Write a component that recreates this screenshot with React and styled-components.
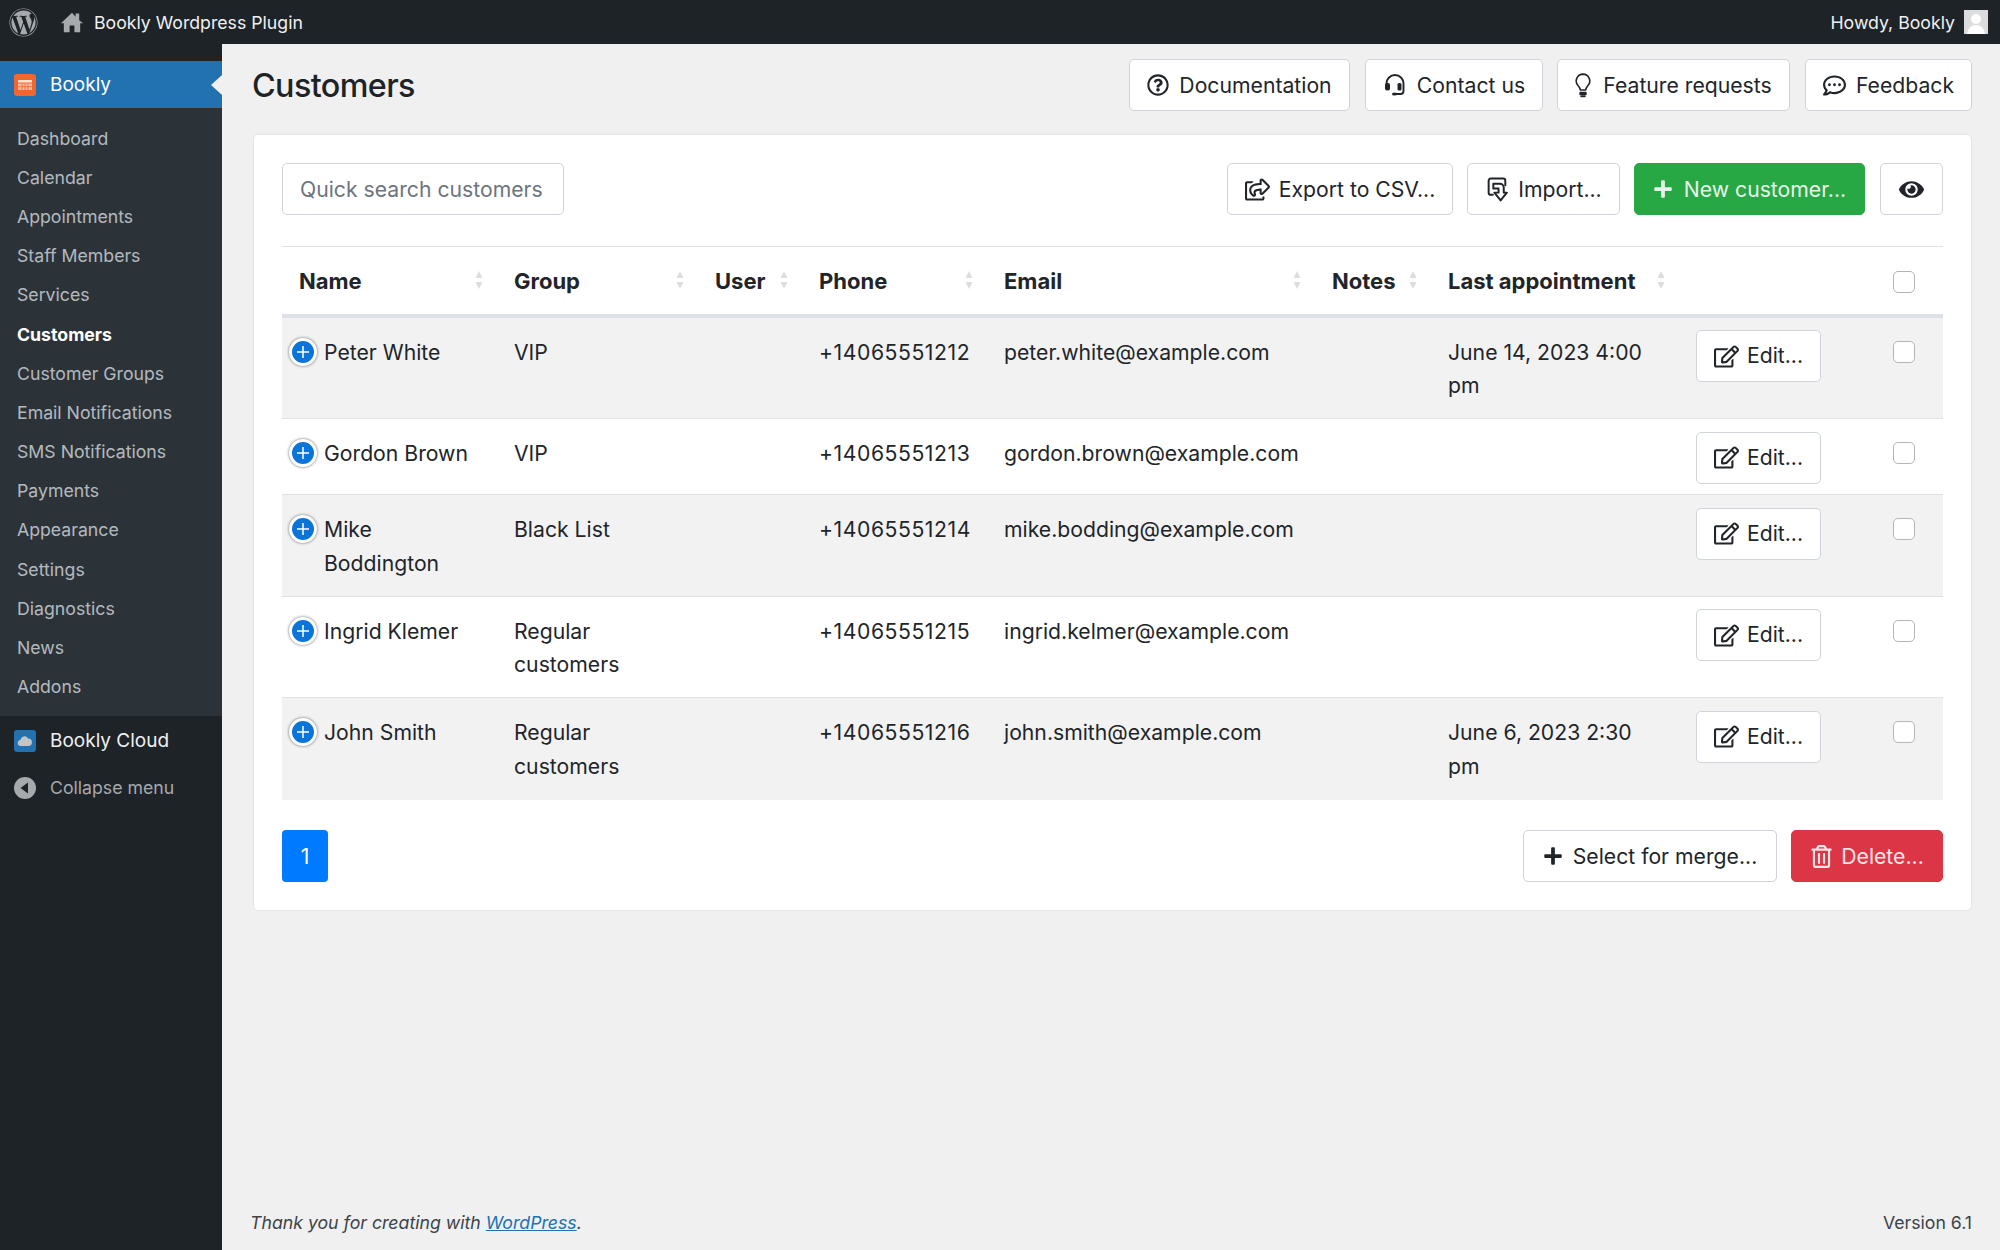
import React from 'react';
import styled, { createGlobalStyle } from 'styled-components';
import { FaWordpress, FaPlus, FaEye, FaRegEdit, FaRegTrashAlt, FaRegQuestionCircle, FaRegCommentDots, FaRegShareSquare } from 'react-icons/fa';

const Global = createGlobalStyle`
  html, body { margin: 0; padding: 0; background: #f0f0f1; }
  body { font-family: Inter, "Noto Sans", "Liberation Sans", sans-serif; color: #212529; -webkit-font-smoothing: antialiased; }
  * { box-sizing: border-box; }
`;

const Shell = styled.div`
  width: 2000px; height: 1250px; display: flex; flex-direction: column; overflow: hidden;
`;
const TopBar = styled.header`
  height: 44px; flex: none; background: #1d2327; color: #f0f0f1; display: flex; align-items: center;
  padding: 1px 12px 0 9px; font-size: 17.7px;
`;
const WpLogo = styled(FaWordpress)`
  width: 29px; height: 29px; color: #a7aaad; margin-right: 22px; margin-top: -1px;
`;
const HomeIcon = styled.svg`
  width: 24px; height: 24px; fill: #a7aaad; margin-right: 10px; margin-top: -1px;
`;
const SiteName = styled.span` flex: 1; `;
const Howdy = styled.span` margin-right: 9px; `;
const Avatar = styled.span`
  width: 24px; height: 24px; margin-top: -1px; background: #dcdcde; display: flex; align-items: flex-end; justify-content: center; overflow: hidden;
`;
const Body = styled.div` flex: 1; display: flex; min-height: 0; `;
const Sidebar = styled.nav`
  width: 222px; flex: none; background: #1d2327; padding-top: 17px; display: flex; flex-direction: column;
`;
const ActiveItem = styled.div`
  position: relative; height: 47px; background: #2271b1; color: #fff; display: flex; align-items: center; padding-left: 14px; font-size: 19px;
  &::after {
    content: ""; position: absolute; right: 0; top: 50%; margin-top: -10px;
    border: 10px solid transparent; border-left: 0; border-right: 11px solid #f0f0f1;
  }
`;
const MenuIcon = styled.span`
  width: 22px; height: 22px; border-radius: 3px; background: ${p => p.$bg}; margin-right: 14px; display: flex; align-items: center; justify-content: center; flex: none;
`;
const SubMenu = styled.div`
  background: #2c3338; height: 608px; padding-top: 10.5px; display: flex; flex-direction: column;
`;
const SubItem = styled.div`
  height: 39.2px; flex: none; display: flex; align-items: center; padding-left: 17px; font-size: 17.7px;
  color: ${p => p.$on ? '#fff' : 'rgba(240,246,252,.7)'}; font-weight: ${p => p.$on ? 700 : 400};
`;
const CloudItem = styled.div`
  height: 47px; margin-top: 1px; display: flex; align-items: center; padding-left: 14px; font-size: 19px; color: #f0f0f1;
`;
const CollapseItem = styled.div`
  height: 47px; display: flex; align-items: center; padding-left: 14px; font-size: 17.7px; color: #a7aaad;
`;
const Main = styled.main`
  flex: 1; display: flex; flex-direction: column; padding: 15px 28px 0 31px; min-width: 0;
`;
const PageHead = styled.div`
  display: flex; align-items: center; height: 52px; margin-bottom: 23px;
`;
const Title = styled.h1`
  margin: 0 0 0 -1px; flex: 1; font-size: 32.3px; font-weight: 500; color: #1d2327; letter-spacing: -.6px;
`;
const Btn = styled.button`
  height: 52px; display: inline-flex; align-items: center; justify-content: center; gap: ${p => p.$gap ?? 10}px;
  padding: 0; width: ${p => p.$w}px; flex: none; margin-left: ${p => p.$ml ?? 0}px; border-radius: 5px; font: inherit; font-size: 21.2px;
  background: ${p => p.$bg || '#fff'}; color: ${p => p.$fg || '#212529'}; border: 1.5px solid ${p => p.$line || '#ced4da'};
  svg { flex: none; }
`;
const Card = styled.section`
  background: #fff; border: 1.5px solid #e2e4e7; border-radius: 5px; padding: 28px 28px 28px; height: 777px;
`;
const Toolbar = styled.div` display: flex; align-items: center; height: 52px; margin-bottom: 31px; `;
const Search = styled.div`
  width: 282px; height: 52px; border: 1.5px solid #ced4da; border-radius: 5px; display: flex; align-items: center; padding-left: 17px; font-size: 21.2px; color: #6c757d; margin-right: auto;
`;
const Table = styled.table`
  width: 1661px; border-collapse: separate; border-spacing: 0; table-layout: fixed; font-size: 21.2px; line-height: 33.5px; border-top: 1.5px solid #dee2e6;
`;
const Th = styled.th`
  position: relative; height: 70.5px; padding: 2.5px 17px 0; text-align: left; font-size: 22px; font-weight: 700; border-bottom: 4px solid #dee2e6; white-space: nowrap;
`;
const Sort = styled.svg`
  position: absolute; right: 14px; top: 50%; margin-top: -10px; width: 8px; height: 20px; fill: #dddddd;
`;
const Row = styled.tr` background: ${p => p.$odd ? '#f2f2f2' : '#fff'}; `;
const Td = styled.td`
  padding: ${p => p.$tight ? '12.5px 17px 10.5px' : '18px 17px 15.6px'}; vertical-align: top;
  border-bottom: 1.5px solid ${p => p.$last ? 'transparent' : '#dee2e6'};
`;
const PhoneText = styled.span` letter-spacing: .55px; `;
const NameCell = styled(Td)`
  position: relative; padding-left: 42px;
`;
const Expand = styled.span`
  position: absolute; left: 7px; top: 20px; width: 28px; height: 28px; border-radius: 50%; background: #0b74d8; border: 3px solid #fff;
  box-shadow: 0 0 3px #666; color: #fff; display: flex; align-items: center; justify-content: center;
`;
const Check = styled.span`
  display: block; width: 22px; height: 22px; border: 1.5px solid #b5b5b5; border-radius: 5px; background: #fff; margin-top: ${p => p.$top ?? 0}px; margin-left: 39px;
`;
const Foot = styled.div` display: flex; justify-content: space-between; margin-top: 30.5px; `;
const PageNum = styled.span`
  width: 46px; height: 52px; border-radius: 4px; background: #007bff; color: #fff; display: flex; align-items: center; justify-content: center; font-size: 21.2px;
`;
const FootBtns = styled.div` display: flex; `;
const Footer = styled.footer`
  margin-top: auto; margin-left: -3px; height: 38px; display: flex; justify-content: space-between; font-size: 17.7px; color: #3c434a;
  a { color: #2271b1; }
`;
const Thanks = styled.em` font-style: italic; `;

const customers = [
  { n: 'Peter White', g: 'VIP', p: '+14065551212', e: 'peter.white@example.com', l: 'June 14, 2023 4:00 pm' },
  { n: 'Gordon Brown', g: 'VIP', p: '+14065551213', e: 'gordon.brown@example.com', l: '' },
  { n: 'Mike Boddington', g: 'Black List', p: '+14065551214', e: 'mike.bodding@example.com', l: '' },
  { n: 'Ingrid Klemer', g: 'Regular customers', p: '+14065551215', e: 'ingrid.kelmer@example.com', l: '' },
  { n: 'John Smith', g: 'Regular customers', p: '+14065551216', e: 'john.smith@example.com', l: 'June 6, 2023 2:30 pm' },
];
const menu = ['Dashboard','Calendar','Appointments','Staff Members','Services','Customers','Customer Groups','Email Notifications','SMS Notifications','Payments','Appearance','Settings','Diagnostics','News','Addons'];
const cols = [215,201,104,185,328,116,248,158,106];
const heads = ['Name','Group','User','Phone','Email','Notes','Last appointment'];

const SortMark = () => (
  <Sort viewBox="0 0 8 20"><path d="M4 1 7.5 8H.5zM4 19 .5 12h7z" /></Sort>
);
const ImportIcon = () => (
  <svg viewBox="0 0 24 24" width="25" height="25" fill="none" stroke="currentColor" strokeWidth="1.9" strokeLinejoin="round" strokeLinecap="round">
    <path d="M7.5 17H5.5a2 2 0 0 1-2-2V3.5a2 2 0 0 1 2-2h12a2 2 0 0 1 2 2V8" />
    <path d="M8 6.5h6.5a3.5 3.5 0 0 1 3.5 3.5v5h3l-6 7.5-6-7.5h4v-4h-5z" />
  </svg>
);
const HeadsetIcon = () => (
  <svg viewBox="0 0 24 24" width="24" height="24" fill="none" stroke="currentColor" strokeWidth="1.9" strokeLinecap="round">
    <path d="M3.5 12v-1.5a8.5 8.5 0 0 1 17 0V18a3 3 0 0 1-3 3H13" />
    <rect x="2" y="10" width="5" height="7.5" rx="2" fill="currentColor" stroke="none" />
    <rect x="14.5" y="10" width="4" height="7.5" rx="1.6" fill="currentColor" stroke="none" />
    <ellipse cx="11.5" cy="21" rx="2.6" ry="1.6" fill="currentColor" stroke="none" />
  </svg>
);
const BulbIcon = () => (
  <svg viewBox="5 1 14 22" width="16" height="25" fill="none" stroke="currentColor" strokeWidth="1.4" strokeLinejoin="round">
    <path d="M12 2a6 6 0 0 0-4.2 10.2c1 1.1 1.7 2.2 1.8 3.8h4.8c.1-1.6.8-2.7 1.8-3.8A6 6 0 0 0 12 2z" />
    <path d="M9.5 18.3h5v1.6h-5zM10.3 21.6h3.4" fill="currentColor" strokeLinecap="round" />
  </svg>
);

export default function App() {
  return (
    <Shell>
      <Global />
      <TopBar>
        <WpLogo />
        <HomeIcon viewBox="0 0 20 20"><path d="M16 8.5V3h-3v2.6L10 2.2 0.8 11h2.4v7.5H8V13h4v5.5h4.8V11h2.4z" /></HomeIcon>
        <SiteName>Bookly Wordpress Plugin</SiteName>
        <Howdy>Howdy, Bookly</Howdy>
        <Avatar><svg viewBox="0 0 24 24" width="24" height="24" fill="#fff"><circle cx="12" cy="9" r="5"/><path d="M3 24c1-7 5-9 9-9s8 2 9 9z"/></svg></Avatar>
      </TopBar>
      <Body>
        <Sidebar>
          <ActiveItem>
            <MenuIcon $bg="#f4662f">
              <svg viewBox="0 0 16 16" width="16" height="16">
                <path d="M1 3h14v2.5H1z" fill="#fde3d6" />
                <path d="M1 6.5h14V13H1z" fill="#f9b79b" />
                <path d="M5 6.5V13M8 6.5V13M11 6.5V13M1 9.7h14" stroke="#f4662f" strokeWidth=".8" />
              </svg>
            </MenuIcon>
            Bookly
          </ActiveItem>
          <SubMenu>
            {menu.map(m => <SubItem key={m} $on={m === 'Customers'}>{m}</SubItem>)}
          </SubMenu>
          <CloudItem>
            <MenuIcon $bg="#2271b1"><svg viewBox="0 0 16 16" width="16" height="16" fill="#c3c4c7"><path d="M4 13a3 3 0 0 1-.5-6A4 4 0 0 1 11 5.5 3.8 3.8 0 0 1 12 13z" /></svg></MenuIcon>
            Bookly Cloud
          </CloudItem>
          <CollapseItem>
            <MenuIcon $bg="transparent"><svg viewBox="0 0 22 22" width="22" height="22"><circle cx="11" cy="11" r="11" fill="#a7aaad"/><path d="M14 5.5v11L6.5 11z" fill="#1d2327"/></svg></MenuIcon>
            Collapse menu
          </CollapseItem>
        </Sidebar>
        <Main>
          <PageHead>
            <Title>Customers</Title>
            <Btn $w={221}><FaRegQuestionCircle size={22} />Documentation</Btn>
            <Btn $w={178} $ml={15}><HeadsetIcon />Contact us</Btn>
            <Btn $w={233} $ml={14} $gap={12}><BulbIcon />Feature requests</Btn>
            <Btn $w={167} $ml={15}><FaRegCommentDots size={23} />Feedback</Btn>
          </PageHead>
          <Card>
            <Toolbar>
              <Search>Quick search customers</Search>
              <Btn $w={226} $gap={9}><FaRegShareSquare size={25} />Export to CSV...</Btn>
              <Btn $w={153} $ml={14} $gap={8}><ImportIcon />Import...</Btn>
              <Btn $w={231} $ml={14} $gap={11} $bg="#28a745" $fg="#e6f5ea" $line="#28a745"><FaPlus size={20} />New customer...</Btn>
              <Btn $w={63} $ml={15}><FaEye size={25} /></Btn>
            </Toolbar>
            <Table>
              <colgroup>{cols.map((c, i) => <col key={i} style={{ width: c }} />)}</colgroup>
              <thead>
                <tr>
                  {heads.map(h => <Th key={h}>{h}<SortMark /></Th>)}
                  <Th />
                  <Th><Check /></Th>
                </tr>
              </thead>
              <tbody>
                {customers.map((c, i) => {
                  const last = i === customers.length - 1;
                  return (
                    <Row key={c.n} $odd={i % 2 === 0}>
                      <NameCell $last={last}><Expand><svg viewBox="0 0 12 12" width="12" height="12" stroke="#fff" strokeWidth="1.5"><path d="M6 0v12M0 6h12" /></svg></Expand>{c.n}</NameCell>
                      <Td $last={last}>{c.g}</Td>
                      <Td $last={last} />
                      <Td $last={last}><PhoneText>{c.p}</PhoneText></Td>
                      <Td $last={last}>{c.e}</Td>
                      <Td $last={last} />
                      <Td $last={last}>{c.l}</Td>
                      <Td $tight $last={last}><Btn $w={125} $gap={8}><FaRegEdit size={25} />Edit...</Btn></Td>
                      <Td $tight $last={last}><Check $top={10.5} /></Td>
                    </Row>
                  );
                })}
              </tbody>
            </Table>
            <Foot>
              <PageNum>1</PageNum>
              <FootBtns>
                <Btn $w={254}><FaPlus size={20} />Select for merge...</Btn>
                <Btn $w={152} $ml={14} $gap={8} $bg="#dc3545" $fg="#fbe4e6" $line="#dc3545"><FaRegTrashAlt size={23} />Delete...</Btn>
              </FootBtns>
            </Foot>
          </Card>
          <Footer>
            <Thanks>Thank you for creating with <a href="#wp">WordPress</a>.</Thanks>
            <span>Version 6.1</span>
          </Footer>
        </Main>
      </Body>
    </Shell>
  );
}
